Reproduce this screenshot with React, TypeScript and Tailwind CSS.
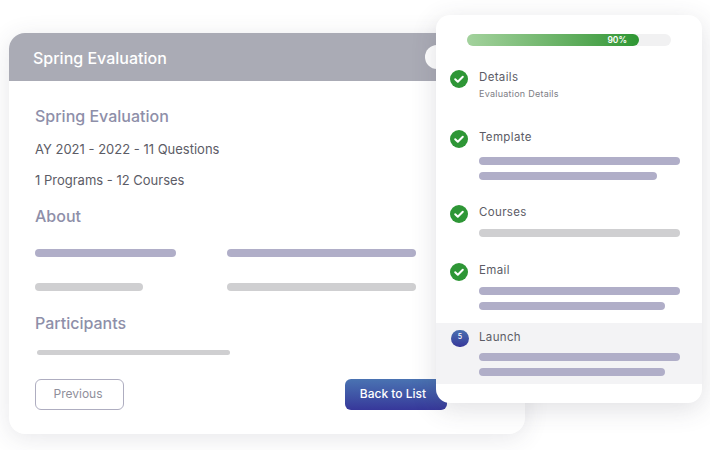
const FONT = "font-['Inter','Liberation_Sans',sans-serif]";

type Step = {
  label: string;
  sub?: string;
  bars: { w: string; color: string }[];
  rowClass: string;
  barsClass?: string;
  active?: boolean;
};

const STEPS: Step[] = [
  { label: "Details", sub: "Evaluation Details", bars: [], rowClass: "h-[60px]" },
  {
    label: "Template",
    bars: [
      { w: "w-[201px]", color: "bg-[#b0aec8]" },
      { w: "w-[178px]", color: "bg-[#b0aec8]" },
    ],
    rowClass: "h-[75px]",
    barsClass: "mt-[13px]",
  },
  {
    label: "Courses",
    bars: [{ w: "w-[201px]", color: "bg-[#cfcfd1]" }],
    rowClass: "h-[58px]",
    barsClass: "mt-[10px]",
  },
  {
    label: "Email",
    bars: [
      { w: "w-[201px]", color: "bg-[#b0aec8]" },
      { w: "w-[186px]", color: "bg-[#b0aec8]" },
    ],
    rowClass: "h-[60px]",
    barsClass: "mt-[10px]",
  },
  {
    label: "Launch",
    bars: [
      { w: "w-[201px]", color: "bg-[#b0aec8]" },
      { w: "w-[186px]", color: "bg-[#b0aec8]" },
    ],
    rowClass: "h-[61px] pt-[7px] bg-[#f3f3f5]",
    barsClass: "mt-[9px]",
    active: true,
  },
];

function CheckBadge() {
  return (
    <svg width="18" height="18" viewBox="0 0 18 18" className="shrink-0">
      <circle cx="9" cy="9" r="9" fill="#2e9636" />
      <path d="M5.2 9.2l2.6 2.6 5-5" fill="none" stroke="#fff" strokeWidth="2" strokeLinecap="round" strokeLinejoin="round" />
    </svg>
  );
}

function StepRow({ step }: { step: Step }) {
  return (
    <div className={`flex gap-[11px] pl-[14px] ${step.rowClass}`}>
      {step.active ? (
        <div className="ml-[1px] -mr-[1px] flex h-[17px] w-[18px] shrink-0 items-center justify-center rounded-full bg-gradient-to-b from-[#4a6fb0] to-[#37379a] pb-[2px] text-[7px] font-medium text-white">
          5
        </div>
      ) : (
        <CheckBadge />
      )}
      <div className="min-w-0 flex-1">
        <div className="text-[11.5px] leading-[14px] tracking-[0.35px] text-[#5c5c66]">{step.label}</div>
        {step.sub && (
          <div className="mt-[4px] text-[9px] leading-[11px] tracking-[0.25px] text-[#7d7d85]">{step.sub}</div>
        )}
        {step.bars.length > 0 && (
          <div className={`flex flex-col gap-[7px] ${step.barsClass}`}>
            {step.bars.map((b, i) => (
              <div key={i} className={`h-[8px] rounded-full ${b.w} ${b.color}`} />
            ))}
          </div>
        )}
      </div>
    </div>
  );
}

export default function App() {
  return (
    <div className={`relative h-[450px] w-[710px] overflow-hidden bg-white ${FONT}`}>
      <div className="pl-[9px] pt-[33px]">
        <div className="relative h-[401px] w-[516px] overflow-hidden rounded-[16px] bg-white shadow-[0_4px_24px_rgba(60,60,80,0.12)]">
          <div className="flex h-[48px] items-center justify-between bg-[#aaabb5] pl-[24px] pr-[76px]">
            <span className="pt-[2px] text-[16px] font-medium text-white">Spring Evaluation</span>
            <div className="h-[24px] w-[24px] rounded-full bg-white" />
          </div>

          <div className="pl-[26px] pt-[25px]">
            <h2 className="text-[16px] font-medium leading-[20px] text-[#8e8fa9]">Spring Evaluation</h2>
            <p className="mt-[14px] text-[13px] leading-[18px] text-[#5c5c66]">AY 2021 - 2022 - 11 Questions</p>
            <p className="mt-[13px] text-[13px] leading-[18px] text-[#5c5c66]">1 Programs - 12 Courses</p>

            <h2 className="mt-[17px] text-[16px] font-medium leading-[20px] text-[#8e8fa9]">About</h2>
            <div className="mt-[23px] grid grid-cols-[192px_189px] gap-y-[26px]">
              <div className="h-[8px] w-[141px] rounded-full bg-[#b0aec8]" />
              <div className="h-[8px] w-[189px] rounded-full bg-[#b0aec8]" />
              <div className="h-[8px] w-[108px] rounded-full bg-[#cfcfd1]" />
              <div className="h-[8px] w-[189px] rounded-full bg-[#cfcfd1]" />
            </div>

            <h2 className="mt-[22px] text-[16px] font-medium leading-[20px] text-[#8e8fa9]">Participants</h2>
            <div className="ml-[2px] mt-[17px] h-[5px] w-[193px] rounded-full bg-[#cfcfd1]" />

            <div className="mt-[24px] flex h-[31px] w-[412px] items-stretch justify-between">
              <button
                type="button"
                className="w-[89px] rounded-[6px] border border-[#aeadc0] pb-[2px] pr-[3px] text-[12px] text-[#8f8f9b]"
              >
                Previous
              </button>
              <button
                type="button"
                className="w-[102px] rounded-[6px] bg-gradient-to-b from-[#4a73b2] to-[#37379a] pb-[2px] pr-[6px] text-[12px] font-medium text-white"
              >
                Back to List
              </button>
            </div>
          </div>
        </div>
      </div>

      <div className="absolute left-[436px] top-[15px] h-[388px] w-[266px] rounded-[14px] bg-white shadow-[0_6px_26px_rgba(60,60,80,0.16)]">
        <div className="ml-[31px] mt-[19px] h-[12px] w-[204px] rounded-full bg-[#f1f1f2]">
          <div className="flex h-[12px] w-[172px] items-center justify-end rounded-full bg-gradient-to-r from-[#a3d29d] to-[#2c9632] pr-[12px] text-[8.5px] font-semibold leading-none text-white">
            90%
          </div>
        </div>
        <div className="mt-[24px]">
          {STEPS.map((s) => (
            <StepRow key={s.label} step={s} />
          ))}
        </div>
      </div>
    </div>
  );
}
